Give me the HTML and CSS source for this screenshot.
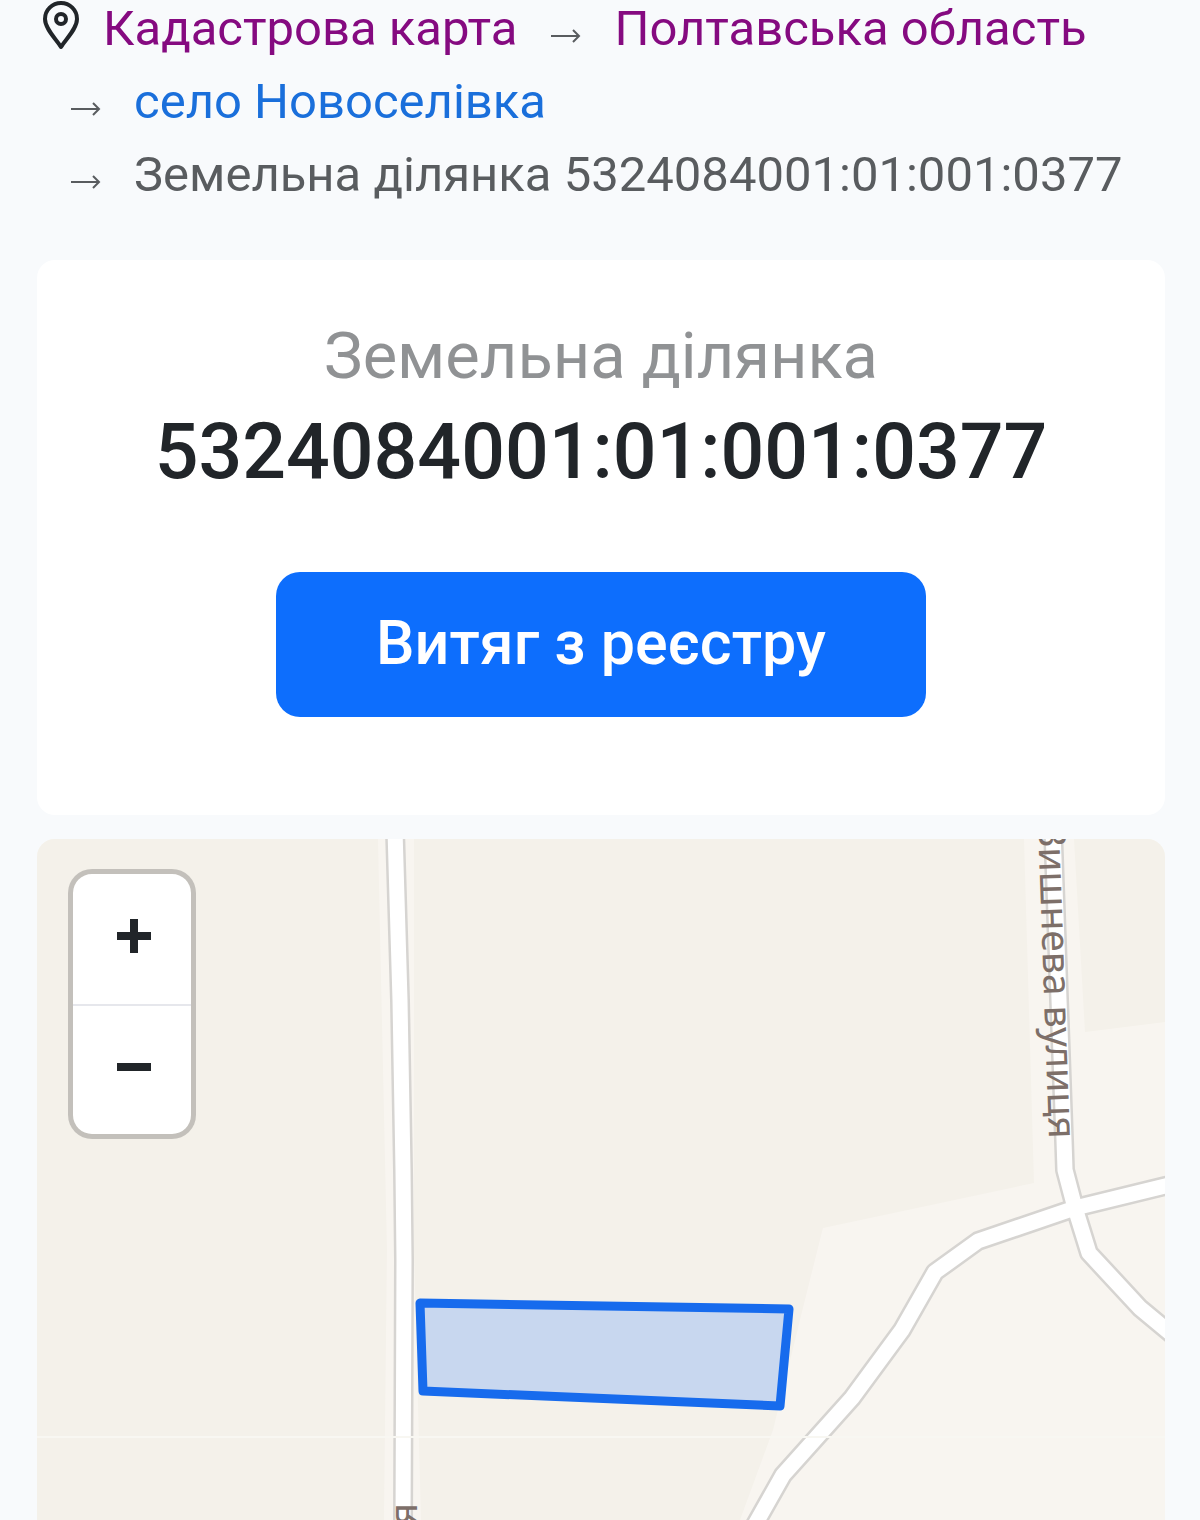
FILE: index.html
```html
<!DOCTYPE html>
<html lang="uk">
<head>
  <meta charset="UTF-8" />
  <meta name="viewport" content="width=device-width, initial-scale=1.0"/>
  <title>Земельна ділянка 5324084001:01:001:0377</title>
  <link rel="stylesheet" href="styles.css">
</head>
<body>

  <!-- Breadcrumbs -->
  <nav aria-label="Навігація">
    <ol class="breadcrumb">
      <li>
        <svg class="pin" viewBox="0 0 48 57" aria-hidden="true">
          <path d="M24 47C20 40 8 29 8 19A16 16 0 0 1 40 19C40 29 28 40 24 47Z" />
          <circle cx="24" cy="19" r="5" />
        </svg>
        <a class="visited" href="#map">Кадастрова карта</a>
      </li>
      <li>
        <svg class="arrow" viewBox="0 0 30 57" aria-hidden="true"><path d="M0 36H28M22 30L28 36L22 42" /></svg>
        <a class="visited" href="#region">Полтавська область</a>
      </li>
      <li>
        <svg class="arrow" viewBox="0 0 30 57" aria-hidden="true"><path d="M0 36H28M22 30L28 36L22 42" /></svg>
        <a href="#village">село Новоселівка</a>
      </li>
      <li>
        <svg class="arrow" viewBox="0 0 30 57" aria-hidden="true"><path d="M0 36H28M22 30L28 36L22 42" /></svg>
        <span>Земельна ділянка 5324084001:01:001:0377</span>
      </li>
    </ol>
  </nav>

  <!-- Parcel -->
  <main class="card">
    <h1 class="title">
      <span class="title-label">Земельна ділянка</span>
      <span class="title-number">5324084001:01:001:0377</span>
    </h1>
    <button type="button" class="btn">Витяг з реєстру</button>
  </main>

  <!-- Map -->
  <section class="map" id="map" aria-label="Карта">
    <svg class="map-canvas" viewBox="37 839 1128 681" preserveAspectRatio="xMinYMin slice">
      <!-- fields -->
      <path class="field" d="M37 839H378L387 1250L384 1520H37Z" />
      <path class="field" d="M414 839H1024L1034 1183L823 1228L800 1320L773 1430L740 1520H421L414 1250Z" />
      <path class="field" d="M1074 839H1165V1022L1085 1032Z" />
      <!-- roads -->
      <g class="road-edge">
        <path d="M395 830L400 1000L403 1170L404 1260L403 1530" />
        <path d="M1053 830L1064 1140L1065 1170L1075 1208L1089 1253L1140 1308L1175 1337" />
        <path d="M1180 1183L1165 1186L1075 1208L978 1241L935 1272L902 1330L852 1398L783 1475L752 1530" />
      </g>
      <g class="road">
        <path d="M395 830L400 1000L403 1170L404 1260L403 1530" />
        <path d="M1053 830L1064 1140L1065 1170L1075 1208L1089 1253L1140 1308L1175 1337" />
        <path d="M1180 1183L1165 1186L1075 1208L978 1241L935 1272L902 1330L852 1398L783 1475L752 1530" />
      </g>
      <path class="tile-edge" d="M37 1437H1165" />
      <text class="street" transform="translate(1049 1139) rotate(88)">Вишнева вулиця</text>
      <text class="street" transform="translate(417 1503) rotate(-90)">вулиця</text>
      <!-- parcel boundary -->
      <path class="parcel" d="M420 1303L789 1309L780 1406L423 1391Z" />
    </svg>

    <div class="zoom">
      <button type="button" aria-label="Збільшити">
        <svg viewBox="0 0 34 34" aria-hidden="true"><path d="M0 17H34M17 0V34" /></svg>
      </button>
      <button type="button" aria-label="Зменшити">
        <svg viewBox="0 0 34 34" aria-hidden="true"><path d="M0 17H34" /></svg>
      </button>
    </div>
  </section>

</body>
</html>
```
FILE: styles.css
```css
* {
  box-sizing: border-box;
}

body {
  font-family: Roboto, "Noto Sans", sans-serif;
  background: #f8fafc;
  color: #212529;
  min-height: 100vh;
  margin: 0;
  padding: 0 35px 0 37px;
  display: flex;
  flex-direction: column;
}

.breadcrumb {
  list-style: none;
  margin: 0 0 57px;
  padding: 0;
  display: flex;
  flex-wrap: wrap;
  row-gap: 16px;
  font-size: 49px;
  line-height: 57px;
  color: #595c5f;
}

.breadcrumb li {
  display: flex;
}

.breadcrumb a {
  color: #1a6fdb;
  text-decoration: none;
}

.breadcrumb a.visited {
  color: #850a80;
}

.pin {
  width: 48px;
  height: 57px;
  margin-right: 18px;
  fill: none;
  stroke: #212529;
  stroke-width: 4;
  stroke-linejoin: round;
}

.arrow {
  width: 30px;
  height: 57px;
  margin: 0 33px 0 34px;
  fill: none;
  stroke: #595c5f;
  stroke-width: 2;
}

.card {
  background: white;
  border-radius: 18px;
  padding: 52px 32px 98px;
  display: flex;
  flex-direction: column;
  align-items: center;
  gap: 68px;
}

.title {
  margin: 0;
  text-align: center;
  font-weight: 500;
}

.title-label,
.title-number {
  display: block;
}

.title-label {
  font-size: 65px;
  line-height: 88px;
  font-weight: 400;
  color: #909294;
}

.title-number {
  font-size: 77px;
  line-height: 104px;
}

.btn {
  background: #0d6efd;
  color: white;
  border: none;
  border-radius: 24px;
  padding: 34px 100px 36px;
  font-family: inherit;
  font-size: 61px;
  line-height: 75px;
  font-weight: 500;
  cursor: pointer;
}

.btn:hover {
  background: #0b5ed7;
}

.map {
  position: relative;
  flex: 1;
  min-height: 400px;
  margin-top: 24px;
  border-radius: 18px 18px 0 0;
  overflow: hidden;
  background: #f8f5f0;
}

.map-canvas {
  position: absolute;
  top: 0;
  left: 0;
  width: 100%;
  height: 100%;
}

.field {
  fill: #f4f1ea;
}

.road,
.road-edge {
  fill: none;
  stroke-linejoin: round;
}

.road {
  stroke: white;
  stroke-width: 15px;
}

.road-edge {
  stroke: #d6d4d1;
  stroke-width: 20px;
}

.tile-edge {
  stroke: #f8f7f2;
  stroke-width: 2px;
}

.street {
  font-family: "Noto Sans", sans-serif;
  font-size: 39px;
  text-anchor: end;
  fill: #7d6f69;
}

.parcel {
  fill: #c8d7ef;
  stroke: #176bed;
  stroke-width: 9px;
  stroke-linejoin: round;
}

.zoom {
  position: absolute;
  top: 30px;
  left: 31px;
  display: flex;
  flex-direction: column;
  border: 5px solid rgba(0, 0, 0, 0.2);
  border-radius: 24px;
  background: white;
  background-clip: padding-box;
}

.zoom button {
  width: 118px;
  height: 130px;
  padding: 0 0 6px 4px;
  border: none;
  background: none;
  display: flex;
  align-items: center;
  justify-content: center;
  cursor: pointer;
}

.zoom button + button {
  border-top: 2px solid #e6e7ec;
}

.zoom svg {
  width: 34px;
  height: 34px;
  stroke: #212529;
  stroke-width: 8px;
}
```
